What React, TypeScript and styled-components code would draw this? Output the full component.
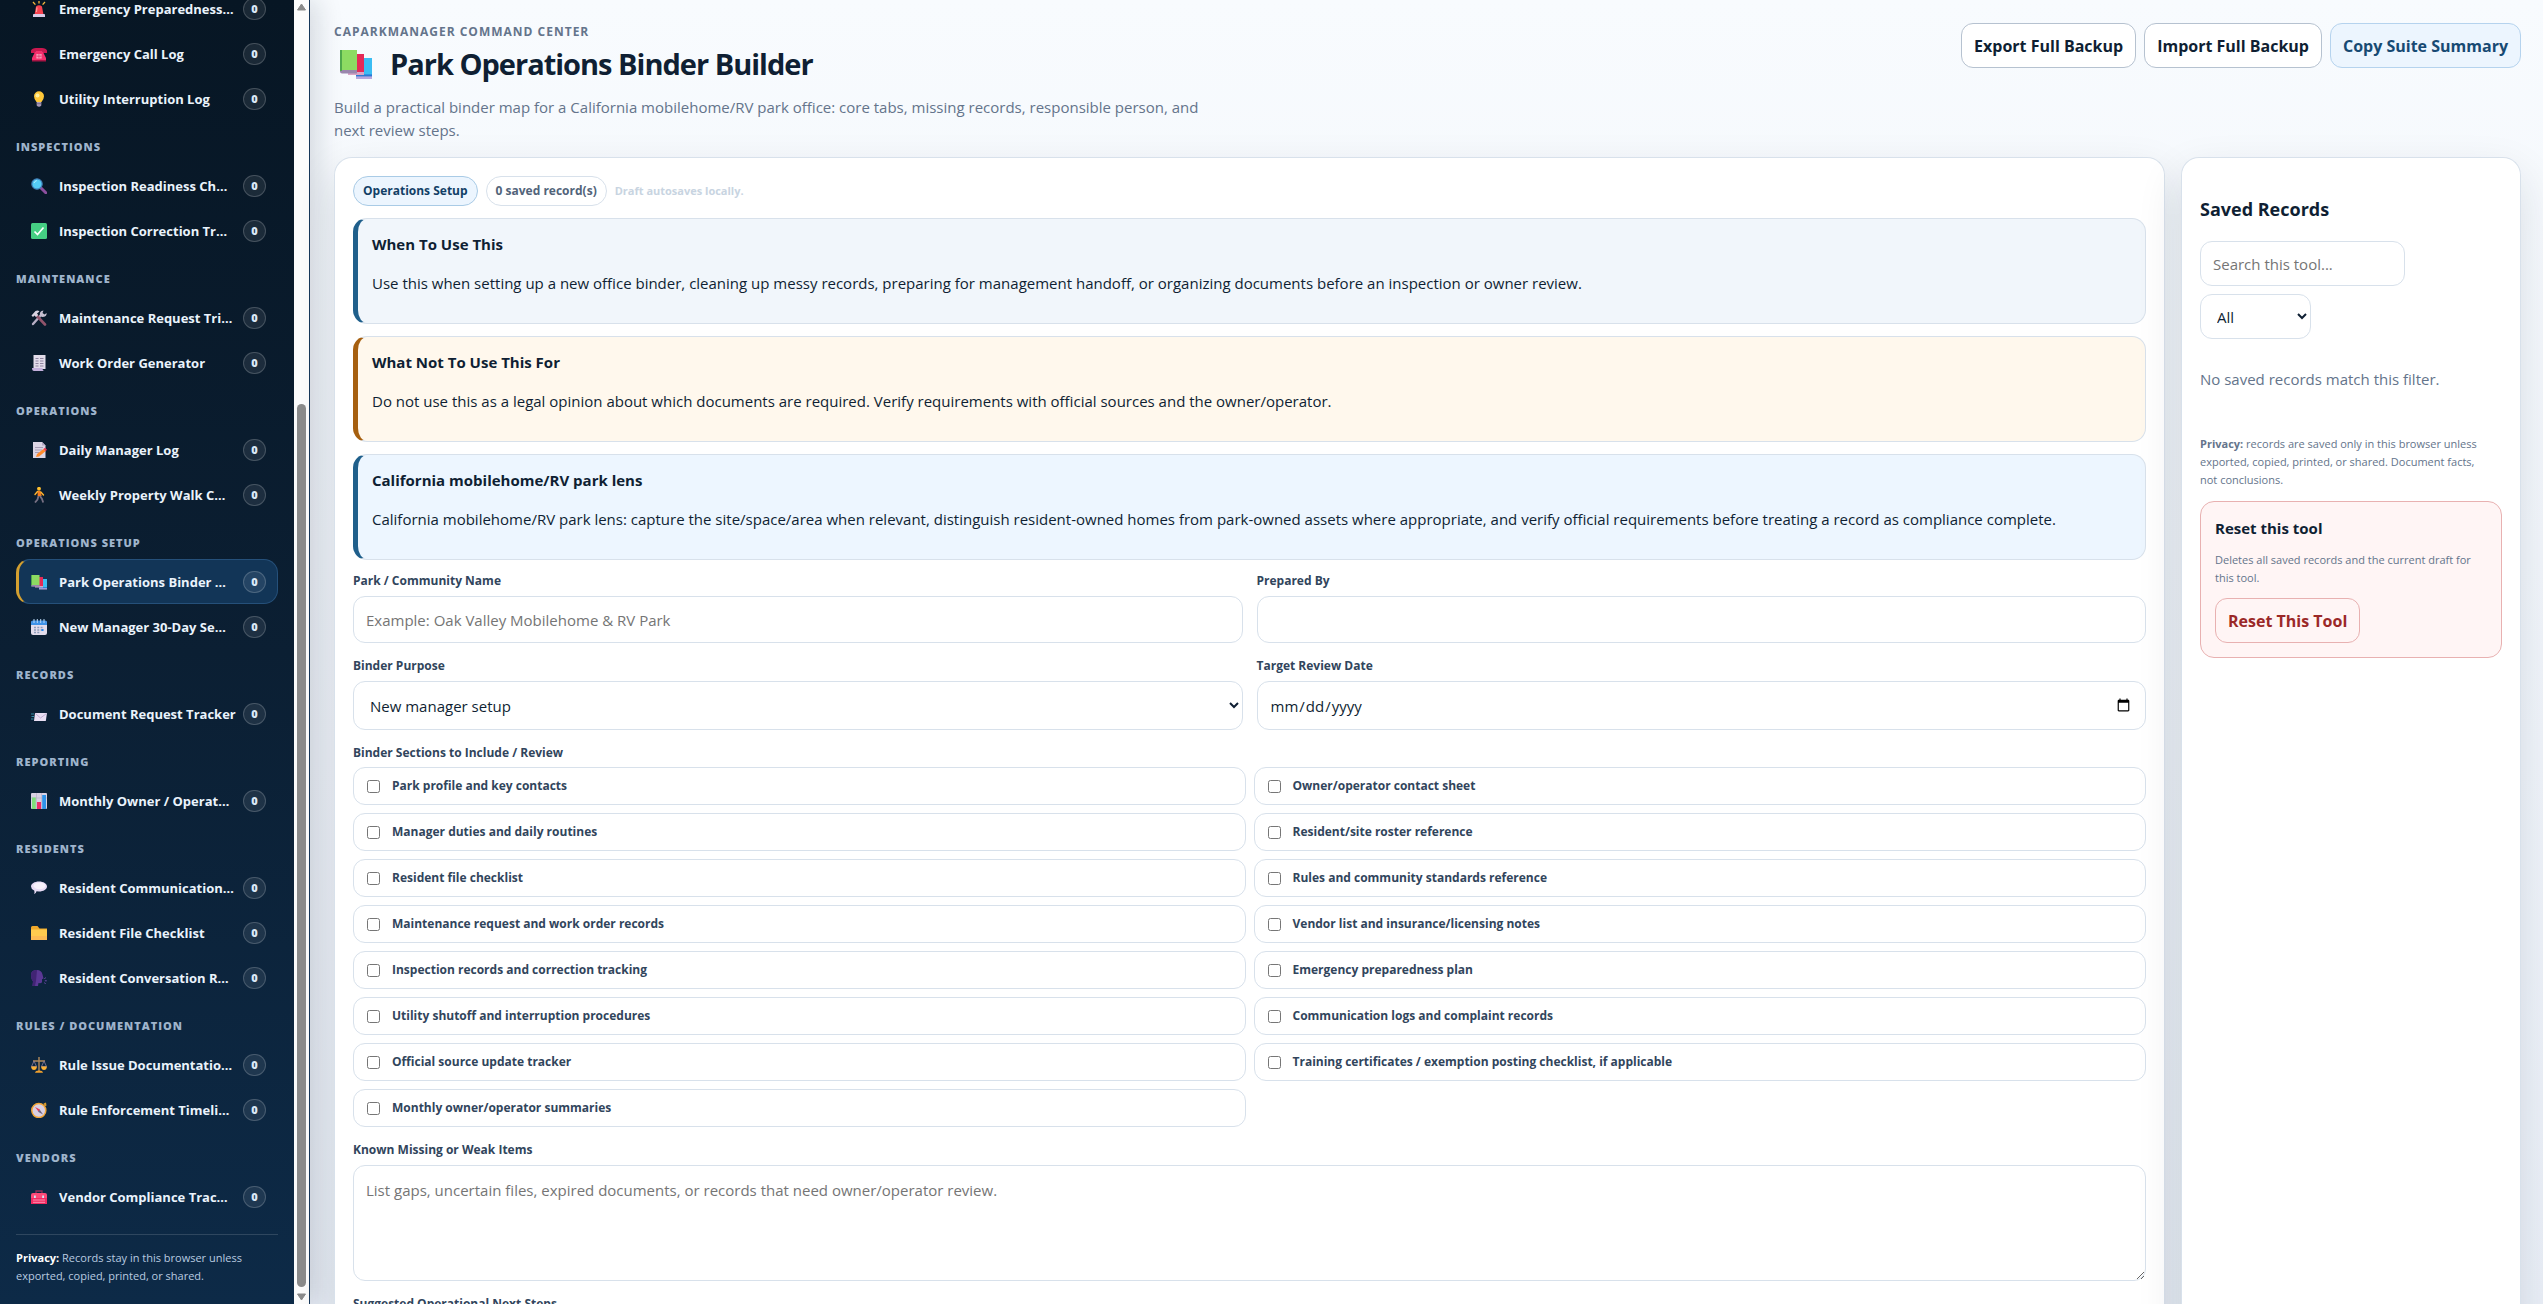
import React, { useState } from "react";
import styled, { createGlobalStyle, css } from "styled-components";

const GlobalStyle = createGlobalStyle`
  *, *::before, *::after { box-sizing: border-box; }
  body {
    margin: 0;
    color: #0f1f33;
    background: #f8fbfe;
    font-family: "Open Sans", "Noto Sans", sans-serif;
    font-size: 15px;
    line-height: 24px;
  }
  button, input, select, textarea { font: inherit; color: inherit; }
  h1, h2, h3, p, fieldset { margin: 0; padding: 0; border: 0; }
`;

const Shell = styled.div`
  display: flex;
  height: 100vh;
  overflow: hidden;
  background: linear-gradient(180deg, #f8fbfe 0%, #eaeff7 100%);
`;

/* ---------- Sidebar ---------- */

const Sidebar = styled.aside`
  flex: none;
  width: 310px;
  display: flex;
  border-right: 1px solid #17375a;
  background: linear-gradient(180deg, #071624 0%, #0b1f33 50%, #0d2a47 100%);
  box-shadow: 8px 0 24px rgba(15, 31, 51, 0.14);
`;

const SidebarBody = styled.div`
  flex: 1;
  min-width: 0;
  display: flex;
  flex-direction: column;
  justify-content: flex-end;
  overflow: hidden;
  padding: 0 16px 19px;
`;

const Group = styled.nav`
  flex: none;
  display: flex;
  flex-direction: column;
`;

const GroupTitle = styled.h3`
  padding: 17px 0 7px;
  color: #9fb4cc;
  font-size: 11px;
  line-height: 18px;
  font-weight: 800;
  letter-spacing: 1px;
  text-transform: uppercase;
`;

const ToolButton = styled.button<{ $active?: boolean }>`
  display: flex;
  align-items: center;
  gap: 12px;
  width: 100%;
  height: 45px;
  padding: 0 11px 0 14px;
  border: 1px solid transparent;
  border-radius: 14px;
  background: transparent;
  color: #eaf3fc;
  font-size: 13px;
  line-height: 20px;
  font-weight: 700;
  text-align: left;
  white-space: nowrap;
  ${(p) =>
    p.$active &&
    css`
      padding-left: 12px;
      border-color: #25507a;
      border-left: 3px solid #d4a030;
      background: #123557;
    `}
`;

const ToolName = styled.span`
  flex: 1;
  min-width: 0;
`;

const Count = styled.span`
  flex: none;
  width: 23px;
  height: 22px;
  border: 1px solid rgba(255, 255, 255, 0.18);
  border-radius: 11px;
  background: rgba(255, 255, 255, 0.08);
  color: #dbe9f8;
  font-size: 11px;
  line-height: 20px;
  font-weight: 800;
  text-align: center;
`;

const SidebarNote = styled.p`
  flex: none;
  margin-top: 15px;
  padding-top: 14px;
  border-top: 1px solid rgba(255, 255, 255, 0.14);
  color: #b9cbe0;
  font-size: 11px;
  line-height: 18px;
  strong { color: #fff; }
`;

const ScrollTrack = styled.div`
  flex: 0 0 15px;
  display: flex;
  flex-direction: column;
  align-items: center;
  justify-content: space-between;
  padding: 3px 0;
  background: #fcfcfc;
`;

const ScrollThumb = styled.div`
  width: 9px;
  height: 68%;
  margin-top: auto;
  margin-bottom: 6px;
  border-radius: 5px;
  background: #8b8b8b;
`;

/* ---------- Main ---------- */

const Main = styled.main`
  flex: 1;
  min-width: 0;
  overflow: hidden;
  display: flex;
  flex-direction: column;
  margin-left: -310px;
  padding: 23px 22px 0 334px;
`;

const Header = styled.header`
  flex: none;
  display: flex;
  justify-content: space-between;
  align-items: flex-start;
`;

const Eyebrow = styled.p`
  color: #64748b;
  font-size: 12px;
  line-height: 18px;
  font-weight: 700;
  letter-spacing: 1px;
  text-transform: uppercase;
`;

const Title = styled.h1`
  display: flex;
  align-items: center;
  gap: 18px;
  margin: 4px 0 13px;
  padding-left: 6px;
  font-size: 29px;
  line-height: 38px;
  font-weight: 700;
  letter-spacing: -1px;
`;

const Subtitle = styled.p`
  max-width: 880px;
  color: #64748b;
  line-height: 23px;
`;

const Actions = styled.div`
  display: flex;
  gap: 8px;
`;

const Button = styled.button<{ $tone?: "info" | "danger" }>`
  height: 45px;
  padding: 0 12px;
  border: 1px solid #b6c2d0;
  border-radius: 12px;
  background: #fff;
  color: #0f1f33;
  font-size: 16px;
  font-weight: 700;
  white-space: nowrap;
  ${(p) =>
    p.$tone === "info" &&
    css`
      border-color: #b5d3ee;
      background: #ecf5fe;
      color: #174a73;
    `}
  ${(p) =>
    p.$tone === "danger" &&
    css`
      border-color: #e8b1b1;
      background: #fff5f5;
      color: #9b2828;
    `}
`;

const Columns = styled.div`
  flex: 1;
  min-height: 0;
  display: grid;
  grid-template-columns: minmax(0, 1fr) 340px;
  gap: 16px;
  margin-top: 15px;
`;

const Panel = styled.section`
  padding: 18px;
  border: 1px solid #d8e1eb;
  border-bottom: 0;
  border-radius: 18px 18px 0 0;
  background: #fff;
  box-shadow: 0 18px 45px rgba(15, 31, 51, 0.12);
`;

const Meta = styled.div`
  display: flex;
  align-items: center;
  gap: 8px;
  margin-bottom: 12px;
  font-size: 12px;
  font-weight: 700;
`;

const Pill = styled.span<{ $info?: boolean }>`
  height: 30px;
  padding: 0 9px;
  border: 1px solid ${(p) => (p.$info ? "#a9cbe6" : "#d8e1eb")};
  border-radius: 15px;
  background: ${(p) => (p.$info ? "#ecf5fe" : "#fff")};
  color: ${(p) => (p.$info ? "#123f66" : "#52647a")};
  line-height: 28px;
`;

const DraftNote = styled.span`
  color: #c8d4e1;
  font-size: 11px;
`;

const Notice = styled.div<{ $bg: string; $bar: string }>`
  margin-bottom: 12px;
  padding: 13px 14px 14px;
  border: 1px solid #d8e1eb;
  border-left: 5px solid ${(p) => p.$bar};
  border-radius: 14px;
  background: ${(p) => p.$bg};
  p { margin: 15px 0 14px; }
`;

const NoticeTitle = styled.h3`
  font-size: 15px;
  font-weight: 700;
`;

const Form = styled.form`
  display: flex;
  flex-direction: column;
  gap: 14px;
`;

const FieldGrid = styled.div`
  display: grid;
  grid-template-columns: 1fr 1fr;
  gap: 14px;
`;

const Field = styled.div`
  display: flex;
  flex-direction: column;
  gap: 6px;
`;

const labelText = css`
  color: #31455c;
  font-size: 12px;
  line-height: 18px;
  font-weight: 700;
`;

const Label = styled.label`
  ${labelText}
`;

const Legend = styled.legend`
  ${labelText}
  margin-bottom: 5px;
  padding: 0;
`;

const control = css`
  border: 1px solid #d8e1eb;
  border-radius: 12px;
  background: #fff;
  &::placeholder { color: #757575; }
`;

const Input = styled.input`
  ${control}
  height: 47px;
  padding: 0 12px;
  &[type="date"] { height: 49px; }
`;

const Select = styled.select`
  ${control}
  height: 49px;
  padding: 0 0 0 12px;
`;

const TextArea = styled.textarea`
  ${control}
  height: 116px;
  padding: 12px;
  resize: vertical;
`;

const SearchInput = styled(Input)`
  width: 205px;
  height: 45px;
`;

const FilterSelect = styled(Select)`
  width: 111px;
  height: 45px;
`;

const CheckGrid = styled.div`
  display: grid;
  grid-template-columns: 1fr 1fr;
  gap: 8px;
`;

const CheckItem = styled.label`
  ${labelText}
  display: flex;
  align-items: center;
  gap: 12px;
  height: 38px;
  padding: 0 13px;
  border: 1px solid #d8e1eb;
  border-radius: 12px;
  input { width: 13px; height: 13px; margin: 0; }
`;

const RecordsTitle = styled.h2`
  margin: 19px 0 18px;
  font-size: 18px;
  line-height: 28px;
  font-weight: 700;
`;

const Filters = styled.div`
  display: flex;
  flex-direction: column;
  align-items: flex-start;
  gap: 8px;
`;

const Empty = styled.p`
  margin: 28px 0 44px;
  color: #64748b;
`;

const Small = styled.p`
  padding-right: 8px;
  color: #64748b;
  font-size: 11px;
  line-height: 18px;
`;

const ResetBox = styled.div`
  margin-top: 12px;
  padding: 14px;
  border: 1px solid #e8b1b1;
  border-radius: 14px;
  background: #fff5f5;
  ${Small} { margin: 11px 0; }
`;

/* ---------- Icons ---------- */

const art: Record<string, React.ReactNode> = {
  siren: (
    <>
      <path d="M2 1l2.4 2.6M8 0v2.6M14 1l-2.4 2.6" stroke="#f5b83d" strokeWidth="1.3" />
      <path d="M3.6 13 5 5.6Q8 3 11 5.6L12.4 13z" fill="#f8414f" />
      <path d="M6 6.4 5.4 11" stroke="#ff9b95" strokeWidth="1.2" />
      <path d="M2 16v-2.200q0-.8.8-.8h10.400q.8 0 .8.8V16z" fill="#d9cbe8" />
    </>
  ),
  phone: (
    <>
      <path d="M0 7V4.500Q1 2 5 2h6q4 0 5 2.500V7h-4V5H4v2z" fill="#c9184f" />
      <path d="M4.500 5h7L15 12v3H1v-3z" fill="#f4306d" />
      <path d="M5.500 8h5v4.500h-5z" fill="#ffb9ce" />
      <path d="M7.200 8v4.500M8.900 8v4.500M5.500 10.200h5" stroke="#d31d58" strokeWidth=".6" />
      <path d="M1 14h14v1.500H1z" fill="#a91445" />
    </>
  ),
  bulb: (
    <>
      <path d="M5.500 11Q3 8 3 5.200a5 5 0 0 1 10 0Q13 8 10.500 11z" fill="#ffc839" />
      <circle cx="6.500" cy="4.500" r="2" fill="#fff0a0" />
      <path d="M5.700 11h4.600v3.500Q8 17 5.700 14.500z" fill="#a99bb8" />
      <path d="M5.700 12.700h4.600" stroke="#6f617d" strokeWidth=".8" />
    </>
  ),
  search: (
    <>
      <path d="m10 10 4.800 4.800" stroke="#8c4f9e" strokeWidth="3" strokeLinecap="round" />
      <circle cx="6" cy="6" r="5.200" fill="#55cdf5" stroke="#3f7cb5" strokeWidth="1.200" />
      <path d="M3 5q.8-2 2.800-2.400" stroke="#b8efff" strokeWidth="1" fill="none" />
    </>
  ),
  check: (
    <>
      <rect width="16" height="16" rx="1.500" fill="#45cf83" />
      <path d="m3.500 8.500 3 3 6-7" fill="none" stroke="#fff" strokeWidth="1.700" />
    </>
  ),
  tools: (
    <>
      <path d="m2 14 8-9" stroke="#b7aec4" strokeWidth="2.400" strokeLinecap="round" />
      <path d="M9 5.500Q8 1 12.500.5L11.500 3l2 1.500L15.600 3Q16 7 11 7z" fill="#c7c0d1" />
      <path d="m6 6 8 8.500" stroke="#91546b" strokeWidth="2.600" strokeLinecap="round" />
      <path d="M.5 5.500 4.500 1Q7 0 8.500 1.500L6 3.500 7.200 5 5 7 3.500 5.500 2 7z" fill="#d9d4e2" />
    </>
  ),
  page: (
    <>
      <path d="M2.500 0h12v14h-12z" fill="#e2dcea" />
      <path d="M1 13h10.500q0 3 2 3H3q-2 0-2-3z" fill="#c3b0dc" />
      <path d="M4.500 3.500h3M9 3.500h3.500M4.500 6h3M9 6h3.500M4.500 8.500h3M9 8.500h3.500M4.500 11h3M9 11h3.500" stroke="#8f84a0" strokeWidth="1" />
    </>
  ),
  memo: (
    <>
      <path d="M2 0h9l3.500 3.500V16H2z" fill="#dcd5e5" />
      <path d="M11 0v3.500h3.500z" fill="#b5a9c5" />
      <path d="M4 5.500h8M4 8h7M4 10.500h4" stroke="#a196b0" strokeWidth=".9" />
      <path d="m5 15 1-3 6.500-5 2 2.200L8 14.500z" fill="#ff8a2b" />
      <path d="m12.500 7 1.500-1.200 2 2L14.500 9.200z" fill="#f0364f" />
    </>
  ),
  walker: (
    <>
      <circle cx="8" cy="1.800" r="1.900" fill="#ffc02e" />
      <path d="M6.500 4h3l1.200 5h-4z" fill="#f57c1f" />
      <path d="M6.500 4.500 4 7.500M9.800 5l2.700 3" stroke="#ffb52e" strokeWidth="1.400" strokeLinecap="round" />
      <path d="m7.500 9-1 3.500L4 15.500M9 9l2 3 1.200 3.500" stroke="#777083" strokeWidth="1.800" fill="none" />
    </>
  ),
  books: (
    <>
      <path d="M8 5h8v9H8z" fill="#3bbdf3" />
      <path d="M8 14h8v1.500H8z" fill="#b7a7dd" />
      <path d="M8 13.200h8v1H8z" fill="#2b78d4" />
      <path d="M5 3h7v9.500H5z" fill="#e52a57" />
      <path d="M4 12h8v1.500H4z" fill="#d8a4c6" />
      <path d="M0 1h8.500v10.500H0z" fill="#8ddb62" />
      <path d="M0 11h8.500v1.800H1q-1 0-1-1z" fill="#9a86ad" />
      <path d="M0 1h1v10.500H0z" fill="#4fa84c" />
    </>
  ),
  calendar: (
    <>
      <rect y="2" width="16" height="14" rx="2" fill="#e3ddec" />
      <path d="M0 6V3.500Q0 1.500 2 1.500h12q2 0 2 2V6z" fill="#3f93e8" />
      <path d="M3 0v4M6.300 0v4M9.700 0v4M13 0v4" stroke="#b9d8f6" strokeWidth="1" />
      <path d="M3 8.500h10M3 11h10M3 13.500h6" stroke="#8e9dbb" strokeWidth="1.500" strokeDasharray="2 1.300" />
      <path d="M10.500 10h2v2h-2z" fill="#2489ed" />
    </>
  ),
  envelope: (
    <>
      <path d="M4 7h12l-1.200 8H3z" fill="#e9dff3" />
      <path d="m4.500 7.500 5 4.500 6-4.500" fill="none" stroke="#bba7cf" strokeWidth=".9" />
      <path d="M0 8h3M.5 10.500H3M0 13h2.500" stroke="#318ca8" strokeWidth="1.200" />
    </>
  ),
  chart: (
    <>
      <rect width="16" height="16" rx="1" fill="#d9d2e3" />
      <path d="M5.500 0v16M10.500 0v16M0 5h16" stroke="#b7adc5" strokeWidth=".6" />
      <path d="M1 4.500h3.800V16H1z" fill="#7fe07a" />
      <path d="M6 9h4v7H6z" fill="#ee2e68" />
      <path d="M11.200 2H15v14h-3.800z" fill="#2f93e9" />
    </>
  ),
  speech: (
    <>
      <path d="M8 1.500c4.500 0 8 2.200 8 5s-3.500 5-8 5l-2.500-.2Q5 14 3 14q1-1.800.2-3.400Q0 9 0 6.500c0-2.800 3.500-5 8-5z" fill="#e8dcf5" />
      <ellipse cx="8.500" cy="5.800" rx="6" ry="3.400" fill="#f7f2fb" />
    </>
  ),
  folder: (
    <>
      <path d="M0 2.500Q0 1 1.500 1h5l2 2.500H16V8H0z" fill="#f0a92b" />
      <path d="M0 4.500h16V15H0z" fill="#ffcb4f" />
      <path d="M0 11h16v4H0z" fill="#fdbb55" />
    </>
  ),
  head: (
    <>
      <path d="M0 5Q0 0 6 0q4.500 0 5.500 4.500l1 4-1.500.8v3q-1 1.200-3.500.7L7 16H1.500l.5-4.500Q0 9 0 5z" fill="#5a3794" />
      <path d="M0 5Q0 0 6 0L5 11l-1 5H1.500l.5-4.500Q0 9 0 5z" fill="#412474" />
      <path d="m13.500 9 1-1.500M13.800 10.800h2M13.500 12.500l1 1.500" stroke="#6b49a8" strokeWidth="1" />
    </>
  ),
  scales: (
    <>
      <path d="M8 0v14M2 4h12" stroke="#b38a5a" strokeWidth="1.400" />
      <path d="M3 4 .5 9.500h5zM13 4l-2.500 5.500h5z" fill="none" stroke="#8d7fa0" strokeWidth=".8" />
      <path d="M0 9.500h6Q5.500 13 3 13T0 9.500zM10 9.500h6q-.5 3.500-3 3.500t-3-3.500z" fill="#fbb034" />
      <path d="M4 15.800q.5-2.300 4-2.300t4 2.300z" fill="#f0a02c" />
    </>
  ),
  compass: (
    <>
      <path d="M12.500 1.500 15 .5l.5 3-1.500 1z" fill="#d99a2b" />
      <circle cx="7.800" cy="8.500" r="7" fill="#d9d0e2" stroke="#f2a637" strokeWidth="1.500" />
      <path d="m4 5 5 2.500L7.500 9.500z" fill="#e83a52" />
      <path d="M12 12.500 7 9.800l1.800-2z" fill="#6e6480" />
    </>
  ),
  toolbox: (
    <>
      <path d="M5 4.500V2h6v2.500" fill="none" stroke="#8e3058" strokeWidth="1.300" />
      <path d="M0 6q0-2 2-2h12q2 0 2 2v3H0z" fill="#ff4a78" />
      <path d="M0 9h16v6H0z" fill="#f32b63" />
      <path d="M2 11h12M2 13.300h12" stroke="#ff9cb8" strokeWidth=".9" />
      <path d="M3 6.500h1.800V9H3zM11.200 6.500H13V9h-1.800z" fill="#d3e3f5" />
    </>
  ),
};

const IconSvg = styled.svg`
  flex: none;
`;

const Icon = ({ name, size = 16 }: { name: string; size?: number }) => (
  <IconSvg width={size} height={size} viewBox="0 0 16 16" fill="none" aria-hidden="true">
    {art[name]}
  </IconSvg>
);

/* ---------- Data ---------- */

const groups: { title?: string; tools: [string, string][] }[] = [
  {
    tools: [
      ["siren", "Emergency Preparedness…"],
      ["phone", "Emergency Call Log"],
      ["bulb", "Utility Interruption Log"],
    ],
  },
  {
    title: "Inspections",
    tools: [
      ["search", "Inspection Readiness Ch…"],
      ["check", "Inspection Correction Tr…"],
    ],
  },
  {
    title: "Maintenance",
    tools: [
      ["tools", "Maintenance Request Tri…"],
      ["page", "Work Order Generator"],
    ],
  },
  {
    title: "Operations",
    tools: [
      ["memo", "Daily Manager Log"],
      ["walker", "Weekly Property Walk C…"],
    ],
  },
  {
    title: "Operations Setup",
    tools: [
      ["books", "Park Operations Binder …"],
      ["calendar", "New Manager 30-Day Se…"],
    ],
  },
  { title: "Records", tools: [["envelope", "Document Request Tracker"]] },
  { title: "Reporting", tools: [["chart", "Monthly Owner / Operat…"]] },
  {
    title: "Residents",
    tools: [
      ["speech", "Resident Communication…"],
      ["folder", "Resident File Checklist"],
      ["head", "Resident Conversation R…"],
    ],
  },
  {
    title: "Rules / Documentation",
    tools: [
      ["scales", "Rule Issue Documentatio…"],
      ["compass", "Rule Enforcement Timeli…"],
    ],
  },
  { title: "Vendors", tools: [["toolbox", "Vendor Compliance Trac…"]] },
];

const notices = [
  {
    title: "When To Use This",
    text: "Use this when setting up a new office binder, cleaning up messy records, preparing for management handoff, or organizing documents before an inspection or owner review.",
    bg: "#f1f6fb",
    bar: "#1f5f8b",
  },
  {
    title: "What Not To Use This For",
    text: "Do not use this as a legal opinion about which documents are required. Verify requirements with official sources and the owner/operator.",
    bg: "#fff8ed",
    bar: "#a65f0f",
  },
  {
    title: "California mobilehome/RV park lens",
    text: "California mobilehome/RV park lens: capture the site/space/area when relevant, distinguish resident-owned homes from park-owned assets where appropriate, and verify official requirements before treating a record as compliance complete.",
    bg: "#edf6ff",
    bar: "#1f5f8b",
  },
];

const sections = [
  "Park profile and key contacts",
  "Owner/operator contact sheet",
  "Manager duties and daily routines",
  "Resident/site roster reference",
  "Resident file checklist",
  "Rules and community standards reference",
  "Maintenance request and work order records",
  "Vendor list and insurance/licensing notes",
  "Inspection records and correction tracking",
  "Emergency preparedness plan",
  "Utility shutoff and interruption procedures",
  "Communication logs and complaint records",
  "Official source update tracker",
  "Training certificates / exemption posting checklist, if applicable",
  "Monthly owner/operator summaries",
];

export default function App() {
  const [active, setActive] = useState("books");

  return (
    <>
      <GlobalStyle />
      <Shell>
        <Sidebar>
          <SidebarBody>
            {groups.map((group, i) => (
              <Group key={i} aria-label={group.title}>
                {group.title && <GroupTitle>{group.title}</GroupTitle>}
                {group.tools.map(([icon, name]) => (
                  <ToolButton key={icon} type="button" $active={icon === active} onClick={() => setActive(icon)}>
                    <Icon name={icon} />
                    <ToolName>{name}</ToolName>
                    <Count>0</Count>
                  </ToolButton>
                ))}
              </Group>
            ))}
            <SidebarNote>
              <strong>Privacy:</strong> Records stay in this browser unless exported, copied, printed, or shared.
            </SidebarNote>
          </SidebarBody>
          <ScrollTrack aria-hidden="true">
            <svg width="9" height="8" viewBox="0 0 9 8"><path d="M4.500 1 8.500 7h-8z" fill="#8b8b8b" stroke="#8b8b8b" strokeLinejoin="round" /></svg>
            <ScrollThumb />
            <svg width="9" height="8" viewBox="0 0 9 8"><path d="M4.500 7 .5 1h8z" fill="#8b8b8b" stroke="#8b8b8b" strokeLinejoin="round" /></svg>
          </ScrollTrack>
        </Sidebar>

        <Main>
          <Header>
            <div>
              <Eyebrow>CAParkManager Command Center</Eyebrow>
              <Title>
                <Icon name="books" size={32} />
                Park Operations Binder Builder
              </Title>
              <Subtitle>
                Build a practical binder map for a California mobilehome/RV park office: core tabs, missing records,
                responsible person, and next review steps.
              </Subtitle>
            </div>
            <Actions>
              <Button type="button">Export Full Backup</Button>
              <Button type="button">Import Full Backup</Button>
              <Button type="button" $tone="info">Copy Suite Summary</Button>
            </Actions>
          </Header>

          <Columns>
            <Panel>
              <Meta>
                <Pill $info>Operations Setup</Pill>
                <Pill>0 saved record(s)</Pill>
                <DraftNote>Draft autosaves locally.</DraftNote>
              </Meta>
              {notices.map((n) => (
                <Notice key={n.title} $bg={n.bg} $bar={n.bar}>
                  <NoticeTitle>{n.title}</NoticeTitle>
                  <p>{n.text}</p>
                </Notice>
              ))}
              <Form>
                <FieldGrid>
                  <Field>
                    <Label htmlFor="park">Park / Community Name</Label>
                    <Input id="park" placeholder="Example: Oak Valley Mobilehome & RV Park" />
                  </Field>
                  <Field>
                    <Label htmlFor="prepared">Prepared By</Label>
                    <Input id="prepared" />
                  </Field>
                  <Field>
                    <Label htmlFor="purpose">Binder Purpose</Label>
                    <Select id="purpose">
                      <option>New manager setup</option>
                    </Select>
                  </Field>
                  <Field>
                    <Label htmlFor="review">Target Review Date</Label>
                    <Input id="review" type="date" />
                  </Field>
                </FieldGrid>
                <fieldset>
                  <Legend>Binder Sections to Include / Review</Legend>
                  <CheckGrid>
                    {sections.map((s) => (
                      <CheckItem key={s}>
                        <input type="checkbox" />
                        {s}
                      </CheckItem>
                    ))}
                  </CheckGrid>
                </fieldset>
                <Field>
                  <Label htmlFor="missing">Known Missing or Weak Items</Label>
                  <TextArea
                    id="missing"
                    placeholder="List gaps, uncertain files, expired documents, or records that need owner/operator review."
                  />
                </Field>
                <Field>
                  <Label htmlFor="next">Suggested Operational Next Steps</Label>
                  <TextArea id="next" />
                </Field>
              </Form>
            </Panel>

            <Panel>
              <RecordsTitle>Saved Records</RecordsTitle>
              <Filters>
                <SearchInput aria-label="Search this tool" placeholder="Search this tool..." />
                <FilterSelect aria-label="Filter records">
                  <option>All</option>
                </FilterSelect>
              </Filters>
              <Empty>No saved records match this filter.</Empty>
              <Small>
                <strong>Privacy:</strong> records are saved only in this browser unless exported, copied, printed, or
                shared. Document facts, not conclusions.
              </Small>
              <ResetBox>
                <NoticeTitle>Reset this tool</NoticeTitle>
                <Small>Deletes all saved records and the current draft for this tool.</Small>
                <Button type="button" $tone="danger">Reset This Tool</Button>
              </ResetBox>
            </Panel>
          </Columns>
        </Main>
      </Shell>
    </>
  );
}
